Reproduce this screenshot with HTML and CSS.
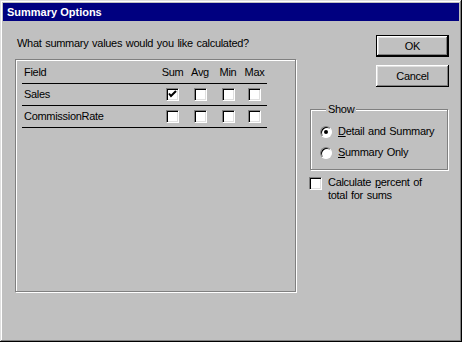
FILE: index.html
```html
<!DOCTYPE html>
<html lang="en">
  <head>
    <meta charset="UTF-8" />
    <title>Summary Options</title>
    <link rel="stylesheet" href="styles.css">
  </head>
  <body>
    <div class="window">
      <div class="titlebar">Summary Options</div>
      <div class="dialog">
        <!-- columna izquierda: pregunta y lista de campos -->
        <section class="main">
          <p class="prompt">What summary values would you like calculated?</p>
          <div class="fields">
            <div class="row head">
              <span class="name">Field</span>
              <span class="cell">Sum</span>
              <span class="cell">Avg</span>
              <span class="cell">Min</span>
              <span class="cell">Max</span>
            </div>
            <div class="row">
              <span class="name">Sales</span>
              <span class="cell"><i class="check">
                <svg viewBox="0 0 11 11" width="11" height="11"><polyline points="2,4.5 4,7 9,2" fill="none" stroke="#000" stroke-width="2" /></svg>
              </i></span>
              <span class="cell"><i class="check"></i></span>
              <span class="cell"><i class="check"></i></span>
              <span class="cell"><i class="check"></i></span>
            </div>
            <div class="row">
              <span class="name">CommissionRate</span>
              <span class="cell"><i class="check"></i></span>
              <span class="cell"><i class="check"></i></span>
              <span class="cell"><i class="check"></i></span>
              <span class="cell"><i class="check"></i></span>
            </div>
          </div>
        </section>
        <!-- columna derecha: botones y opciones -->
        <section class="side">
          <button class="btn default">OK</button>
          <button class="btn">Cancel</button>
          <fieldset class="group">
            <legend>Show</legend>
            <label class="option"><i class="radio on"></i><span><u>D</u>etail and Summary</span></label>
            <label class="option"><i class="radio"></i><span><u>S</u>ummary Only</span></label>
          </fieldset>
          <label class="percent"><i class="check"></i><span>Calculate <u>p</u>ercent of<br>total for sums</span></label>
        </section>
      </div>
    </div>
  </body>
</html>
```

FILE: styles.css
```css
html {
  box-sizing: border-box;
  font-family: "Liberation Sans", Arial, sans-serif;
  font-size: 11px;
}

*,
*:before,
*:after {
  box-sizing: inherit;
}

body {
  margin: 0;
  background: #c0c0c0;
}

/* ventana con borde 3d */
.window {
  width: 462px;
  height: 342px;
  padding: 3px;
  background: #c0c0c0;
  box-shadow: inset -1px -1px 0 #000, inset 1px 1px 0 #dfdfdf,
    inset -2px -2px 0 #808080, inset 2px 2px 0 #fff;
  line-height: 13px;
  color: #000;
}

.titlebar {
  height: 18px;
  padding-left: 4px;
  background: #000080;
  color: #fff;
  font-weight: bold;
  line-height: 18px;
}

/* la letra del sistema es mas estrecha que liberation */
.dialog {
  display: flex;
  gap: 13px;
  padding-left: 12px;
  letter-spacing: -0.3px;
  word-spacing: 1px;
}

.main {
  width: 282px;
}

.prompt {
  margin: 16px 0 0 2px;
}

/* caja grabada */
.fields {
  margin-top: 9px;
  width: 281px;
  height: 233px;
  padding: 6px 0 0 6px;
  border: 1px solid #808080;
  box-shadow: inset 1px 1px 0 #fff, 1px 1px 0 #fff;
}

.row {
  display: grid;
  grid-template-columns: 137px 27px 28px 28px 25px;
  align-items: center;
  width: 245px;
  height: 22px;
  border-bottom: 1px solid #000;
}

.row.head {
  height: 18px;
  align-items: start;
}

.name {
  padding-left: 2px;
}

.cell {
  display: flex;
  justify-content: center;
}

.check {
  display: block;
  width: 13px;
  height: 13px;
  background: #fff;
  border: 1px solid;
  border-color: #808080 #fff #fff #808080;
  box-shadow: inset 1px 1px 0 #000, inset -1px -1px 0 #dfdfdf;
}

.check svg {
  display: block;
}

.side {
  width: 139px;
  display: flex;
  flex-direction: column;
}

.btn {
  align-self: flex-end;
  width: 73px;
  height: 22px;
  padding: 0;
  border: 0;
  background: #c0c0c0;
  font: inherit;
  letter-spacing: inherit;
  color: #000;
  box-shadow: inset -1px -1px 0 #000, inset 1px 1px 0 #fff,
    inset -2px -2px 0 #808080, inset 2px 2px 0 #dfdfdf;
}

.btn.default {
  margin-top: 14px;
  border: 1px solid #000;
}

.btn + .btn {
  margin-top: 8px;
}

.group {
  margin: 16px 0 0;
  width: 138px;
  padding: 5px 0 6px 9px;
  border: 1px solid #808080;
  box-shadow: inset 1px 1px 0 #fff, 1px 1px 0 #fff;
}

.group legend {
  margin-left: 6px;
  padding: 0 2px;
  background: #c0c0c0;
}

.option {
  display: flex;
  align-items: center;
  gap: 6px;
  height: 21px;
}

.radio {
  display: block;
  position: relative;
  width: 12px;
  height: 12px;
  border-radius: 50%;
  background: #fff;
  border: 1px solid;
  border-color: #808080 #fff #fff #808080;
  box-shadow: inset 1px 1px 0 #000;
}

/* punto del radio seleccionado */
.radio.on:after {
  content: "";
  position: absolute;
  left: 3px;
  top: 3px;
  width: 4px;
  height: 4px;
  border-radius: 50%;
  background: #000;
}

.percent {
  display: flex;
  align-items: flex-start;
  gap: 6px;
  margin: 7px 0 0 -1px;
}

.percent span {
  margin-top: -1px;
}
```
